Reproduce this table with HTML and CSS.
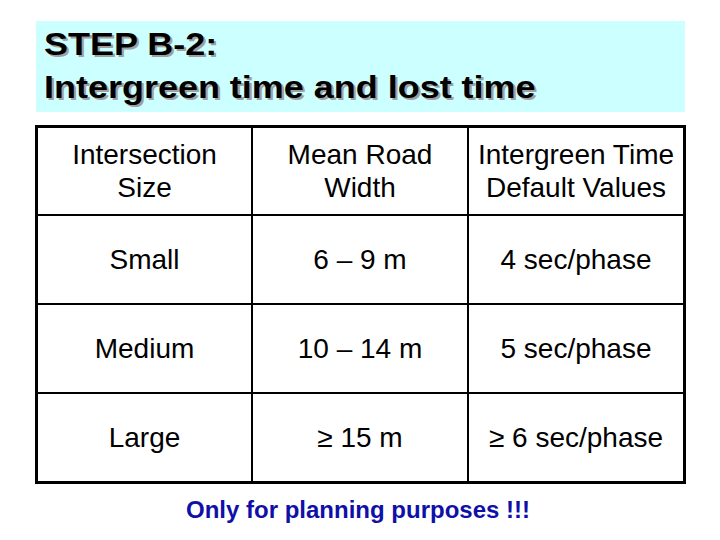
FILE: index.html
```html
<!DOCTYPE html>
<html>
<head>
<meta charset="utf-8">
<link rel="stylesheet" href="styles.css">
</head>
<body>
<div class="slide">
  <div class="title-box">
    <div class="title-line"><span class="stretch">STEP B-2:</span></div>
    <div class="title-line"><span class="stretch">Intergreen time and lost time</span></div>
  </div>
  <div class="table">
    <div class="cell head">Intersection<br>Size</div>
    <div class="cell head">Mean Road<br>Width</div>
    <div class="cell head last-col">Intergreen Time<br>Default Values</div>
    <div class="cell">Small</div>
    <div class="cell">6 – 9 m</div>
    <div class="cell last-col">4 sec/phase</div>
    <div class="cell">Medium</div>
    <div class="cell">10 – 14 m</div>
    <div class="cell last-col">5 sec/phase</div>
    <div class="cell last-row">Large</div>
    <div class="cell last-row">≥ 15 m</div>
    <div class="cell last-row last-col">≥ 6 sec/phase</div>
  </div>
  <div class="note">Only for planning purposes !!!</div>
</div>
</body>
</html>
```
FILE: styles.css
```css
html, body {
  margin: 0;
  padding: 0;
  background: #ffffff;
}
.slide {
  width: 720px;
  height: 540px;
  padding-top: 21px;
  box-sizing: border-box;
  font-family: "Liberation Sans", Arial, sans-serif;
  color: #000;
}
.title-box {
  margin-left: 36px;
  width: 649px;
  height: 91px;
  background: #ccffff;
  box-sizing: border-box;
  padding-left: 8px;
  padding-top: 2px;
}
.title-line {
  font-size: 31px;
  font-weight: bold;
  line-height: 43px;
  height: 43px;
  white-space: nowrap;
}
.stretch {
  display: inline-block;
  transform: scaleX(1.16);
  transform-origin: left center;
  text-shadow: 2px 2px 0 #a0a0a0;
}
.table {
  margin-top: 13px;
  margin-left: 35px;
  width: 651px;
  border: 3px solid #000;
  box-sizing: border-box;
  display: grid;
  grid-template-columns: 215px 216px 214px;
  grid-template-rows: 88px 89px 89px 87px;
}
.cell {
  box-sizing: border-box;
  border-right: 2px solid #000;
  border-bottom: 2px solid #000;
  display: flex;
  align-items: center;
  justify-content: center;
  text-align: center;
  font-size: 28px;
  line-height: 33px;
}
.cell.last-col {
  border-right: none;
}
.cell.last-row {
  border-bottom: none;
}
.note {
  margin-top: 11px;
  text-align: center;
  padding-right: 4px;
  font-size: 24px;
  line-height: 30px;
  font-weight: bold;
  color: #1010a8;
}
```
